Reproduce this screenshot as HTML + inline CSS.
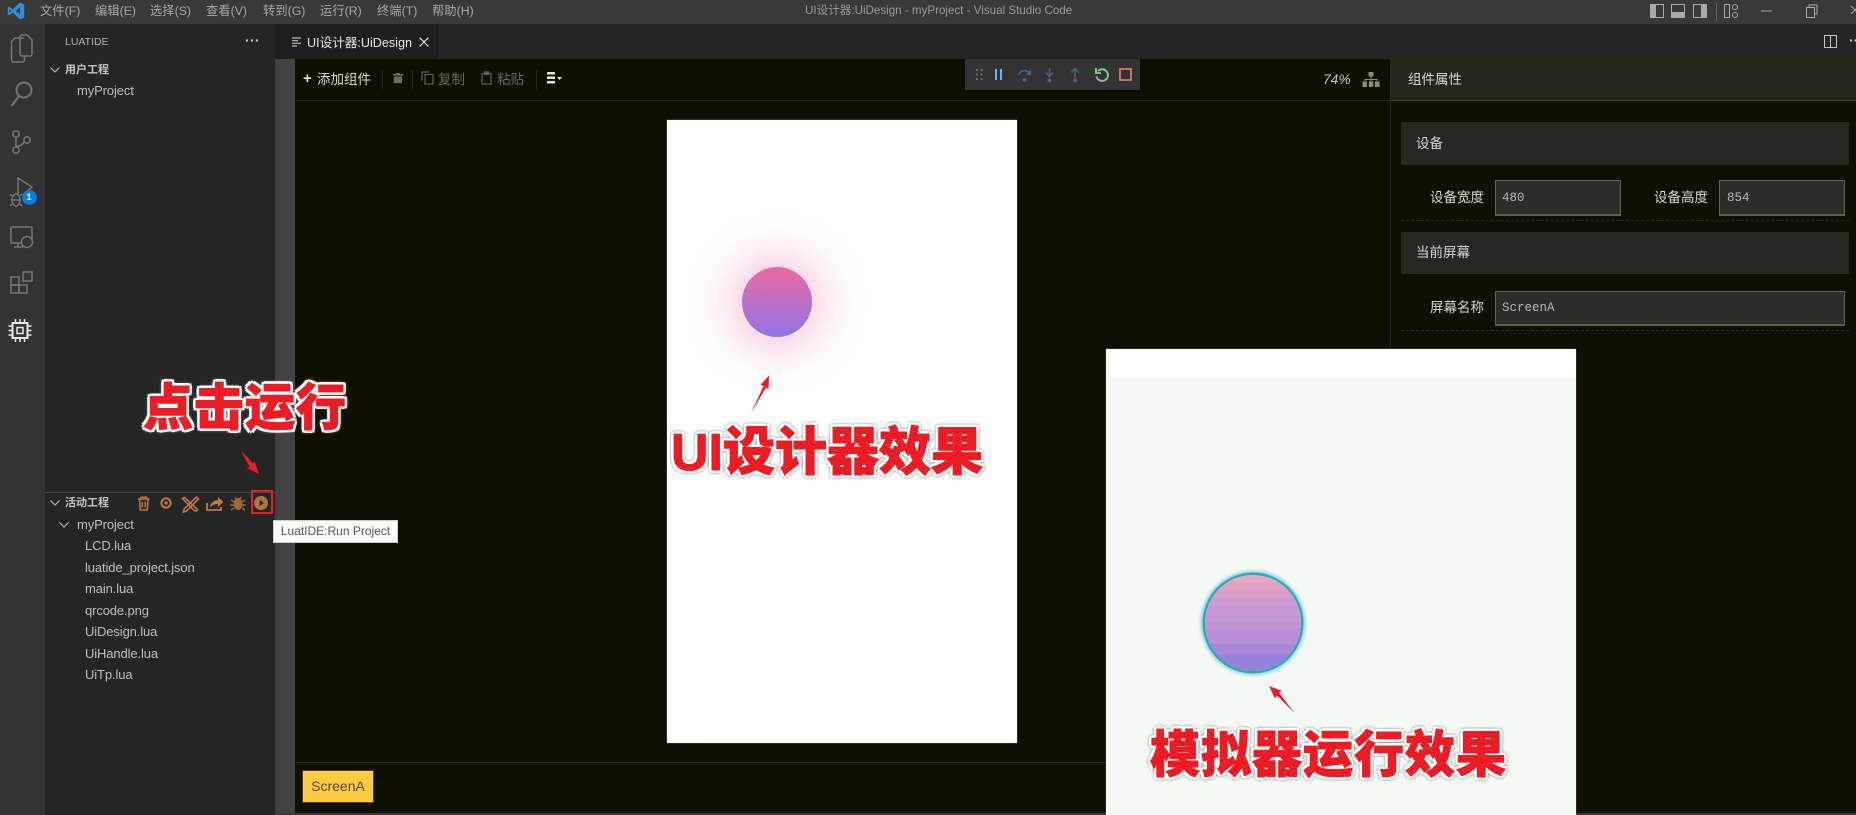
<!DOCTYPE html>
<html lang="zh"><head><meta charset="utf-8"><title>UI设计器:UiDesign - myProject - Visual Studio Code</title>
<style>
html,body{margin:0;padding:0;background:#0f0f00}
body{width:1856px;height:815px;overflow:hidden;position:relative;font-family:"Liberation Sans","Noto Sans CJK SC",sans-serif}
.a{position:absolute}
.t{position:absolute;white-space:nowrap;line-height:16px;font-size:13px;transform:translateY(-50%)}
svg{position:absolute;overflow:visible}
.m{color:#a8a8a8;font-size:12.3px;top:11px}
.f{color:#bdbdbd;left:85px;font-size:13px;letter-spacing:-.12px}
.big{position:absolute;white-space:nowrap;color:#ed1c24;font-weight:900;font-size:50px;line-height:60px;-webkit-text-stroke:1px #ed1c24;text-shadow:3px 0 0 #fff,-3px 0 0 #fff,0 3px 0 #fff,0 -3px 0 #fff,2.500px 2.500px 0 #fff,-2.500px 2.500px 0 #fff,2.500px -2.500px 0 #fff,-2.500px -2.500px 0 #fff;filter:drop-shadow(0 0 1.200px rgba(110,110,110,.9));font-family:"Liberation Sans","Noto Sans CJK SC",sans-serif}
.in{position:absolute;background:#2c2c28;border:1px solid #626258;border-bottom:2px solid #5c5c52;box-sizing:border-box}
.mono{font-family:"Liberation Mono","DejaVu Sans Mono",monospace;color:#b8b8b0;font-size:12.500px}
.w{color:#d8d8d0;font-size:13.500px}
</style></head><body>
<div class="a" style="left:0;top:0;width:1856px;height:24px;background:#393939"></div>
<div class="a" style="left:0;top:24px;width:45px;height:791px;background:#333"></div>
<div class="a" style="left:45px;top:24px;width:230px;height:791px;background:#252526"></div>
<div class="a" style="left:275px;top:24px;width:1581px;height:35px;background:#252526"></div>
<div class="a" style="left:275px;top:24px;width:163px;height:35px;background:#1e1e1e"></div>
<div class="a" style="left:275px;top:59px;width:20px;height:756px;background:#424242"></div>
<div class="a" style="left:295px;top:59px;width:1561px;height:754px;background:#0f0f00"></div>
<div class="a" style="left:275px;top:813px;width:1581px;height:2px;background:#3a3a3a"></div>

<svg style="left:7px;top:2px" width="18" height="18" viewBox="0 0 18 18"><path d="M13 .6 5.800 7.400 2.200 4.600.8 5.400v7.200l1.400.8 3.600-2.800 7.200 6.800 4.200-1.800V2.400z" fill="#2a93dc"/><path d="M13 5.500 8.800 9 13 12.500z" fill="#393939"/><path d="M2.400 7 4.200 9l-1.800 2z" fill="#393939"/></svg>
<div class="t m" style="left:40px">文件(F)</div>
<div class="t m" style="left:95px">编辑(E)</div>
<div class="t m" style="left:150px">选择(S)</div>
<div class="t m" style="left:206px">查看(V)</div>
<div class="t m" style="left:263px">转到(G)</div>
<div class="t m" style="left:320px">运行(R)</div>
<div class="t m" style="left:377px">终端(T)</div>
<div class="t m" style="left:432px">帮助(H)</div>
<div class="t" style="left:805px;top:11px;font-size:11.600px;color:#9c9c9c">UI设计器:UiDesign - myProject - Visual Studio Code</div>

<svg style="left:1650px;top:3px" width="206" height="16" viewBox="0 0 206 16" fill="none" stroke="#aaa" stroke-width="1">
<rect x=".5" y="1.500" width="13" height="13"/><rect x=".5" y="1.500" width="5" height="13" fill="#aaa"/>
<rect x="21.500" y="1.500" width="13" height="13"/><rect x="21.500" y="9.500" width="13" height="5" fill="#aaa"/>
<rect x="43.500" y="1.500" width="13" height="13"/><rect x="51.500" y="1.500" width="5" height="13" fill="#aaa"/>
<path d="M66.500 0v18" stroke="#666"/>
<rect x="74.500" y="1.500" width="5" height="13"/><circle cx="85" cy="4" r="2.500"/><circle cx="85" cy="12" r="2.500"/>
<path d="M111 8h11"/>
<rect x="156.500" y="4.500" width="8" height="10"/><path d="M159 4V2h8v9h-2"/>
<path d="M201 3l8 8m0-8-8 8"/></svg>

<svg style="left:0;top:24px" width="45" height="330" viewBox="0 0 45 330" fill="none" stroke="#767676" stroke-width="1.500">
<path d="M24 14h-9l-3.500 3.500V36a2 2 0 0 0 2 2h9a2 2 0 0 0 2-2v-4"/><path d="M20 13v17a2 2 0 0 0 2 2h8a2 2 0 0 0 2-2V16l-5-5h-5a2 2 0 0 0-2 2z"/>
<circle cx="24" cy="66" r="7.500" stroke-width="2"/><path d="M19 72 11.500 82" stroke-width="2"/>
<circle cx="16" cy="110" r="3.200"/><circle cx="16" cy="126" r="3.200"/><circle cx="27" cy="116" r="3.200"/><path d="M16 113.500v9M24 118c-1 3-5 4-8 5"/>
<path d="M18 170v-16l14 9-4 3"/><path d="M11 176h10M12 172l-2-2M12 180l-2 2M20 172l2-2M20 180l2 2"/><ellipse cx="16" cy="176" rx="4" ry="6"/>
<rect x="11" y="203" width="21" height="16" rx="1"/><path d="M14 223h9M18 219v4"/><circle cx="27" cy="218" r="5.500" fill="#333"/>
<rect x="11" y="253" width="8" height="8"/><rect x="11" y="261" width="8" height="8"/><rect x="19" y="261" width="8" height="8"/><rect x="23" y="248" width="9" height="9"/>
<g stroke="#e8e8e8" transform="translate(-1.500 -1)"><rect x="14" y="300" width="15" height="15" stroke-width="2"/><rect x="18.500" y="304.500" width="6" height="6"/><path d="M17 296v3M21.500 296v3M26 296v3M17 316v3M21.500 316v3M26 316v3M10 303h3M10 307.500h3M10 312h3M30 303h3M30 307.500h3M30 312h3"/></g>
</svg>
<div class="a" style="left:21.500px;top:189.500px;width:15px;height:15px;border-radius:50%;background:#0a7ed8;color:#fff;font-size:9px;font-weight:bold;text-align:center;line-height:15px">1</div>

<div class="t" style="left:65px;top:42px;font-size:10.500px;color:#b0b0b0">LUATIDE</div>
<div class="t" style="left:245px;top:40px;font-size:14px;letter-spacing:.3px;color:#ccc;font-weight:bold">···</div>
<svg style="left:50px;top:66px" width="10" height="8" viewBox="0 0 10 8" fill="none" stroke="#bbb" stroke-width="1.100"><path d="M.5 1.500 5 6l4.500-4.500"/></svg>
<div class="t" style="left:65px;top:70px;font-size:11px;font-weight:bold;color:#c4c4c4">用户工程</div>
<div class="t f" style="left:77px;top:91px">myProject</div>

<div class="a" style="left:45px;top:492px;width:230px;height:1px;background:#444"></div>
<svg style="left:50px;top:499px" width="10" height="8" viewBox="0 0 10 8" fill="none" stroke="#bbb" stroke-width="1.100"><path d="M.5 1.500 5 6l4.500-4.500"/></svg>
<div class="t" style="left:65px;top:503px;font-size:11px;font-weight:bold;color:#c4c4c4">活动工程</div>
<svg style="left:136px;top:493px" width="115" height="20" viewBox="0 0 115 20" fill="none" stroke="#c07a3c" stroke-width="1.500">
<path d="M2 6h11.500M5 6V4.300h5.500V6M3.500 6l.8 11h7l.8-11M6.300 8.500v6M9.300 8.500v6"/>
<circle cx="30" cy="10" r="4.600" stroke-width="2"/><circle cx="30" cy="10" r="1"/>
<path d="M48.500 4.500l13 12-1 1.500-2.500-.5-11.500-12zM60.500 4l2 2-12 12-3.200 1 1-3.200z" stroke-width="1.600"/>
<path d="M71 10v7h14v-3" stroke-width="1.800"/><path d="M74 15c0-5 4-8 8-8V4l5.500 5-5.500 5v-3c-3 0-6 1-8 4z" fill="#c07a3c" stroke="none"/>
<ellipse cx="102" cy="11" rx="4.500" ry="6" fill="#9a6a3a" stroke="none"/><path d="M95 7l3 2M109 7l-3 2M94 12h4M110 12h-4M95 17l3-2M109 17l-3-2M99 4l1 2M105 4l-1 2" stroke="#9a6a3a"/></svg>
<div class="a" style="left:254px;top:496px;width:14px;height:14px;border-radius:50%;background:#b0763c"></div>
<svg style="left:254px;top:496px" width="14" height="14"><path d="M5.500 4l4.500 3-4.500 3z" fill="#252526"/></svg>
<div class="a" style="left:251px;top:490px;width:22px;height:24px;box-sizing:border-box;border:2px solid #ed1c24"></div>
<svg style="left:59px;top:521px" width="10" height="8" viewBox="0 0 10 8" fill="none" stroke="#bbb" stroke-width="1.100"><path d="M.5 1.500 5 6l4.500-4.500"/></svg>
<div class="t f" style="left:77px;top:525px">myProject</div>
<div class="t f" style="left:85px;top:546px">LCD.lua</div>
<div class="t f" style="left:85px;top:568px">luatide_project.json</div>
<div class="t f" style="left:85px;top:589px">main.lua</div>
<div class="t f" style="left:85px;top:611px">qrcode.png</div>
<div class="t f" style="left:85px;top:632px">UiDesign.lua</div>
<div class="t f" style="left:85px;top:654px">UiHandle.lua</div>
<div class="t f" style="left:85px;top:675px">UiTp.lua</div>

<svg style="left:292px;top:37px" width="10" height="10" fill="none" stroke="#bbb" stroke-width="1.200"><path d="M0 1h9M0 3.700h6M0 6.300h9M0 9h5"/></svg>
<div class="t" style="left:307px;top:43px;font-size:12.600px;color:#e8e8e8">UI设计器:UiDesign</div>
<svg style="left:419px;top:37px" width="10" height="10" fill="none" stroke="#e8e8e8" stroke-width="1.200"><path d="M.5.5l9 9m0-9-9 9"/></svg>
<svg style="left:1824px;top:35px" width="14" height="13" fill="none" stroke="#c4c4c4"><rect x=".5" y=".5" width="12" height="12"/><path d="M6.500 0v13"/></svg>
<div class="t" style="left:1849px;top:40px;font-size:14px;color:#ccc;font-weight:bold">···</div>

<div class="a" style="left:295px;top:100px;width:1095px;height:1px;background:#26261a"></div>
<div class="t" style="left:303px;top:79px;font-size:15px;color:#e0e0d8;font-weight:bold">+</div>
<div class="t w" style="left:317px;top:80px">添加组件</div>
<div class="a" style="left:382px;top:70px;width:1px;height:19px;background:#26261a"></div>
<div class="a" style="left:412px;top:70px;width:1px;height:19px;background:#26261a"></div>
<div class="a" style="left:536px;top:70px;width:1px;height:19px;background:#26261a"></div>
<svg style="left:392px;top:72px" width="12" height="12" fill="#6e6e64"><path d="M4 1h4v1h3v1.500H1V2h3zM2 4.500h8V11H2z"/></svg>
<svg style="left:421px;top:71px" width="13" height="14" fill="none" stroke="#5e5e56" stroke-width="1.200"><rect x="4" y="3.500" width="8" height="9.500"/><path d="M1 10V1h7"/></svg>
<div class="t" style="left:438px;top:80px;color:#66665e;font-size:13.500px">复制</div>
<svg style="left:481px;top:71px" width="12" height="14" fill="none" stroke="#5e5e56" stroke-width="1.200"><rect x="1" y="2.500" width="9" height="10.500"/><path d="M3.500 1h4v2.500h-4z" fill="#5e5e56"/></svg>
<div class="t" style="left:497px;top:80px;color:#66665e;font-size:13.500px">粘贴</div>
<svg style="left:547px;top:72px" width="15" height="13" fill="#e8e8e0"><path d="M0 0h8v2.500H0zM0 4.500h8V7H0zM0 9h8v2.500H0zM10 5h5l-2.500 3z"/></svg>

<div class="a" style="left:965px;top:59px;width:175px;height:31px;background:#333;box-shadow:0 1px 4px rgba(0,0,0,.5)"></div>
<svg style="left:965px;top:59px" width="175" height="31" fill="none">
<g fill="#6e6e6e"><rect x="11" y="10" width="2" height="2"/><rect x="15.500" y="10" width="2" height="2"/><rect x="11" y="14.500" width="2" height="2"/><rect x="15.500" y="14.500" width="2" height="2"/><rect x="11" y="19" width="2" height="2"/><rect x="15.500" y="19" width="2" height="2"/></g>
<path d="M31 10v11M36 10v11" stroke="#6fb3ee" stroke-width="2"/>
<path d="M54 16c1-5 8-6 11-1" stroke="#43637f" stroke-width="1.800"/><path d="M66 10.500v5.500h-5z" fill="#43637f"/><circle cx="59.500" cy="21" r="2" fill="#43637f"/>
<path d="M84.500 9v8M81 13.500l3.500 4 3.500-4" stroke="#43637f" stroke-width="1.600"/><circle cx="84.500" cy="21.500" r="2" fill="#43637f"/>
<path d="M110 19V10M106.500 13.500l3.500-4 3.500 4" stroke="#43637f" stroke-width="1.600"/><circle cx="110" cy="21.500" r="2" fill="#43637f"/>
<path d="M133 12a5.800 5.800 0 1 1-1.500 5.500" stroke="#84c480" stroke-width="2"/><path d="M131 9v5h5" stroke="#84c480" stroke-width="2"/>
<rect x="155" y="10" width="11" height="11" stroke="#d97764" stroke-width="1.800"/></svg>

<div class="t" style="left:1323px;top:80px;font-size:13.800px;font-style:italic;color:#c8c8c0">74%</div>
<svg style="left:1362px;top:72px" width="18" height="15" fill="#8c8c7c"><rect x="6.500" y="0" width="5" height="4.500"/><rect x="0.500" y="9.500" width="4.500" height="5.500"/><rect x="6.800" y="9.500" width="4.500" height="5.500"/><rect x="13" y="9.500" width="4.500" height="5.500"/><path d="M8.500 4.500h1v2.500h6v2h-1V8h-5v1.500h-1V8h-5v1.500h-1V7h6z"/></svg>

<div class="a" style="left:1390px;top:59px;width:466px;height:41px;background:#25251b;border-bottom:1px solid #3e3e36;box-sizing:content-box"></div>
<div class="a" style="left:1390px;top:59px;width:1px;height:290px;background:#26261a"></div>
<div class="t w" style="left:1408px;top:80px">组件属性</div>
<div class="a" style="left:1401px;top:122px;width:448px;height:43px;background:#27271f"></div>
<div class="t w" style="left:1416px;top:144px">设备</div>
<div class="t w" style="left:1430px;top:198px">设备宽度</div>
<div class="in" style="left:1495px;top:180px;width:126px;height:36px"></div>
<div class="t mono" style="left:1502px;top:198px">480</div>
<div class="t w" style="left:1654px;top:198px">设备高度</div>
<div class="in" style="left:1719px;top:180px;width:126px;height:36px"></div>
<div class="t mono" style="left:1727px;top:198px">854</div>
<div class="a" style="left:1401px;top:220px;width:448px;border-top:1px dashed #2a2a1e"></div>
<div class="a" style="left:1401px;top:232px;width:448px;height:42px;background:#27271f"></div>
<div class="t w" style="left:1416px;top:253px">当前屏幕</div>
<div class="t w" style="left:1430px;top:308px">屏幕名称</div>
<div class="in" style="left:1495px;top:291px;width:350px;height:35px"></div>
<div class="t mono" style="left:1502px;top:308px">ScreenA</div>
<div class="a" style="left:1401px;top:330px;width:448px;border-top:1px dashed #2a2a1e"></div>

<div class="a" style="left:667px;top:120px;width:350px;height:623px;background:#fff;box-shadow:0 0 1px #aaa"></div>
<div class="a" style="left:742px;top:267px;width:70px;height:70px;border-radius:50%;background:linear-gradient(#e96aa3,#8f75e6);box-shadow:0 0 44px 8px rgba(233,106,163,.45)"></div>

<div class="a" style="left:295px;top:762px;width:1095px;height:1px;background:#26261a"></div>
<div class="a" style="left:302px;top:770px;width:72px;height:33px;background:#ffcb45;box-sizing:border-box;border:1px solid #4a4020;color:#5a4a20;font-size:14px;text-align:center;line-height:31px">ScreenA</div>

<div class="a" style="left:1106px;top:349px;width:470px;height:466px;background:#f6faf7;box-shadow:0 0 1px #999"></div>
<div class="a" style="left:1106px;top:349px;width:470px;height:29px;background:#fff"></div>
<div class="a" style="left:1205px;top:575px;width:96px;height:96px;border-radius:50%;box-sizing:border-box;background:linear-gradient(#eba6c2 0 8%,#e2a2c6 8% 16%,#d99ecb 16% 24%,#d09acf 24% 32%,#c898d4 32% 48%,#bf94d4 48% 56%,#b68fd6 56% 72%,#a886d8 72% 84%,#9880dd 84%);box-shadow:0 0 0 2.500px #2ea9bb,0 0 3px 4.500px rgba(46,169,187,.45)"></div>

<div class="a" style="left:273px;top:520px;width:125px;height:23px;box-sizing:border-box;background:#fff;border:1px solid #ccc;color:#555;font-size:12px;line-height:21px;text-align:center;white-space:nowrap">LuatIDE:Run Project</div>

<svg class="a" style="left:0;top:0;pointer-events:none" width="1856" height="815" fill="#ed1c24">
<path d="M240.500 450 253 463.500l1.500-2 4.500 12.500-12-6 2.500-1.500z"/>
<path d="M769 375.500l-.5 14-2.500-2-15 25.500 12.500-27-3-1z"/>
<path d="M1269 686l13 5-3 1.500 15 20-17-17-2 3z"/></svg>

<div class="big" style="left:143px;top:378px;letter-spacing:1px">点击运行</div>
<div class="big" style="left:671px;top:423px;font-size:52px">UI设计器效果</div>
<div class="big" style="left:1150px;top:725px;letter-spacing:1px">模拟器运行效果</div>
</body></html>
